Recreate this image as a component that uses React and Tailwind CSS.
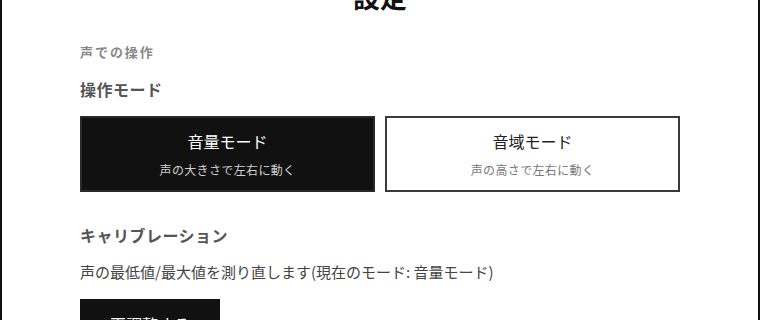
import React, { useState } from "react";

const font = { fontFamily: '"Noto Sans CJK JP", "Noto Sans", sans-serif' };

const ModeCard = ({ title, desc, active, onClick }) => (
  <button
    type="button"
    onClick={onClick}
    className={
      "flex h-[76px] flex-1 flex-col items-center justify-center border-2 " +
      (active ? "border-[#2a2a2a] bg-[#111111]" : "border-[#3a3a3a] bg-white")
    }
  >
    <span className={"text-[16px] leading-[20px] " + (active ? "text-white" : "text-[#222]")}>{title}</span>
    <span className={"mt-[11px] text-[12px] leading-[16px] tracking-[0.03em] " + (active ? "text-[#cfcfcf]" : "text-[#777]")}>
      {desc}
    </span>
  </button>
);

const App = () => {
  const [mode, setMode] = useState("volume");
  const modeName = mode === "volume" ? "音量モード" : "音域モード";

  return (
    <div style={font} className="min-h-screen overflow-hidden border-x-2 border-[#111] bg-white">
      <div className="mx-auto w-[600px]">
        <h1 className="-mt-[20px] text-center text-[27px] font-bold leading-[34px] text-[#111]">設定</h1>

        <p className="mt-[29px] text-[13px] font-bold leading-[18px] tracking-[0.15em] text-[#888]">声での操作</p>

        <h2 className="mt-[18px] text-[16px] font-bold leading-[20px] tracking-[0.03em] text-[#555]">操作モード</h2>

        <div className="mt-[17px] flex gap-[10px]">
          <ModeCard title="音量モード" desc="声の大きさで左右に動く" active={mode === "volume"} onClick={() => setMode("volume")} />
          <ModeCard title="音域モード" desc="声の高さで左右に動く" active={mode === "pitch"} onClick={() => setMode("pitch")} />
        </div>

        <h2 className="mt-[33px] text-[16px] font-bold leading-[20px] tracking-[0.03em] text-[#555]">キャリブレーション</h2>

        <p className="mt-[17px] text-[15px] leading-[20px] text-[#444]">
          声の最低値/最大値を測り直します(現在のモード: {modeName})
        </p>

        <button type="button" className="mt-[17px] h-[50px] w-[140px] bg-[#111] text-[16px] text-white">
          再調整する
        </button>
      </div>
    </div>
  );
};

export default App;
